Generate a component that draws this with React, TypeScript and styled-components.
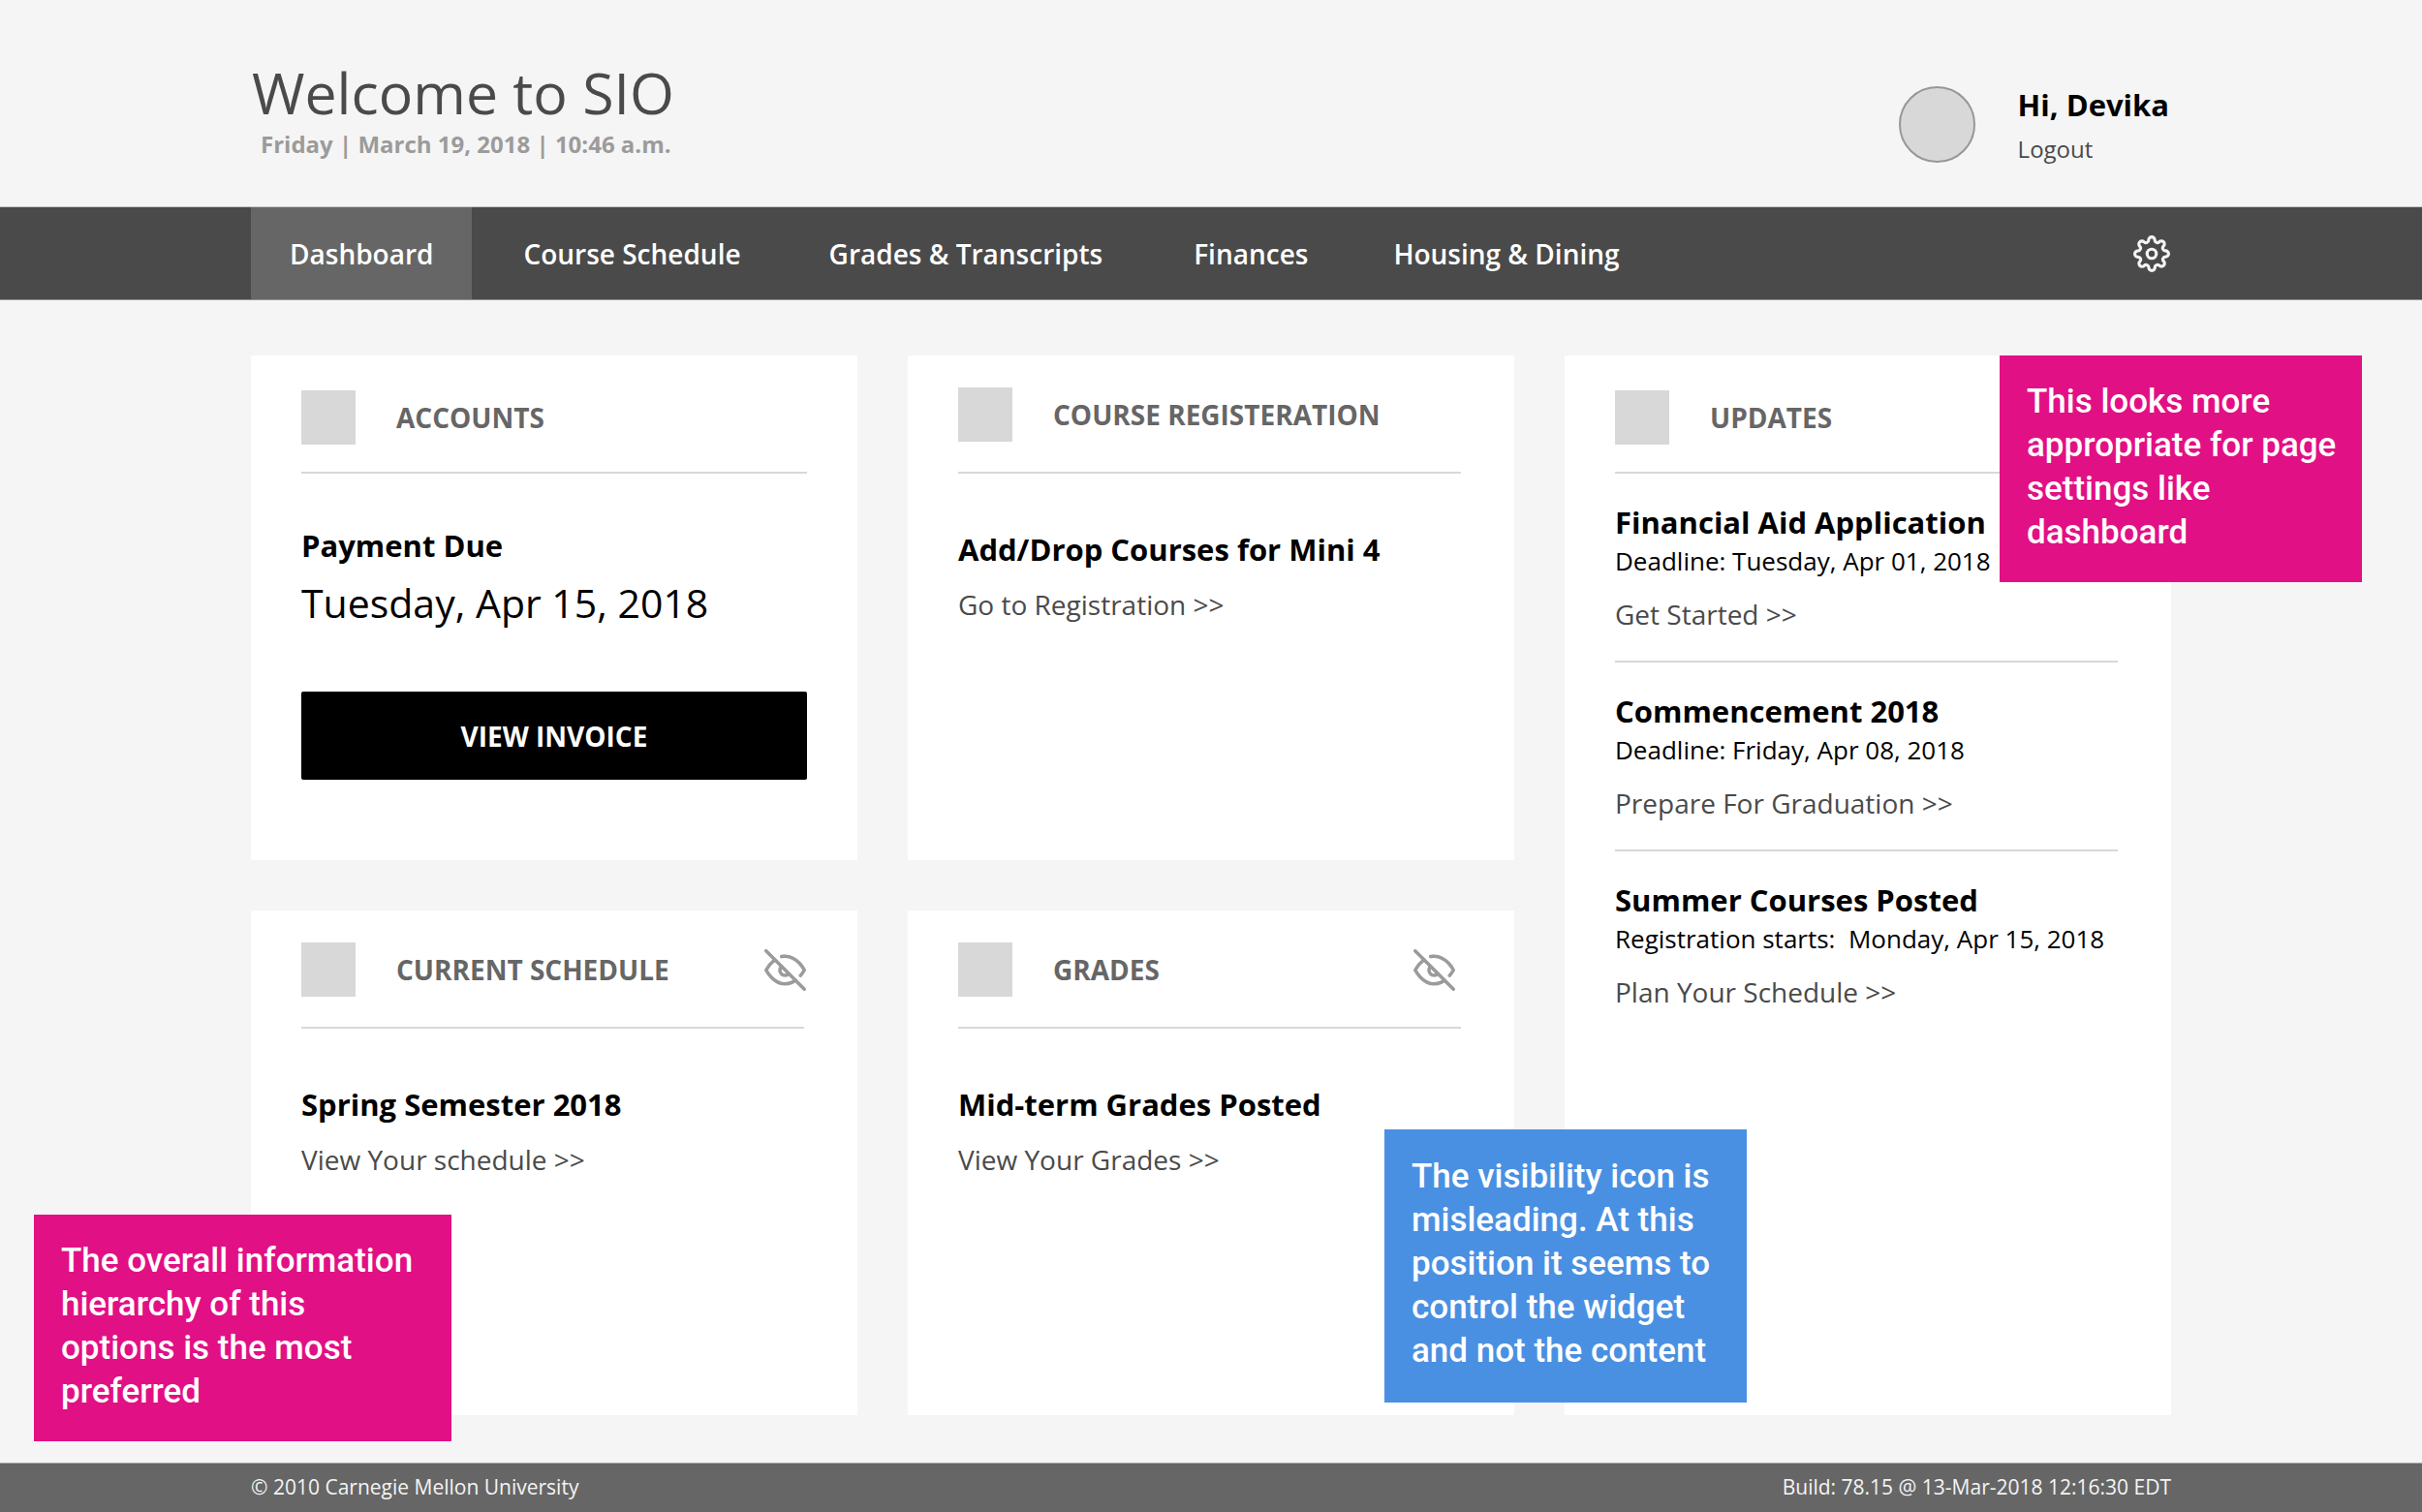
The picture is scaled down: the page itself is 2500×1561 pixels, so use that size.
import React from "react";
import styled, { createGlobalStyle } from "styled-components";
import { FiEyeOff, FiSettings } from "react-icons/fi";

const GlobalStyle = createGlobalStyle`
  *, *::before, *::after { box-sizing: border-box; }
  body {
    margin: 0;
    background: #f5f5f5;
    font-family: "Open Sans", "Noto Sans", sans-serif;
    color: #000;
  }
  h1, h2, h3, p { margin: 0; }
  a { text-decoration: none; }
  button { font-family: inherit; cursor: pointer; }
`;

const Page = styled.div`
  display: flex;
  flex-direction: column;
  min-height: 100vh;
  overflow-x: hidden;
`;

const Container = styled.div`
  width: calc(100% - 120px);
  max-width: 1982px;
  margin: 0 auto;
`;

const HeaderRow = styled(Container)`
  display: flex;
  justify-content: space-between;
  align-items: flex-start;
  height: 213px;
  padding-top: 55px;
`;

const Title = styled.h1`
  padding-left: 1px;
  font-size: 59px;
  line-height: 80px;
  font-weight: 400;
  color: #4a4a4a;
`;

const DateLine = styled.p`
  padding-left: 10px;
  font-size: 24px;
  line-height: 28px;
  font-weight: 700;
  color: #9b9b9b;
`;

const User = styled.div`
  display: flex;
  gap: 44px;
  padding: 34px 2px 0 0;
`;

const Avatar = styled.div`
  width: 79px;
  height: 79px;
  border: 2px solid #979797;
  border-radius: 50%;
  background: #d8d8d8;
`;

const UserText = styled.div`
  margin-top: -2px;
`;

const UserName = styled.p`
  font-size: 31px;
  line-height: 42px;
  font-weight: 700;
`;

const Logout = styled.a`
  display: block;
  font-size: 24px;
  line-height: 50px;
  color: #4a4a4a;
`;

const NavBar = styled.nav`
  background: #4a4a4a;
  border-top: 1px solid #c4c6c4;
  border-bottom: 1px solid #979797;
`;

const NavRow = styled(Container)`
  display: flex;
  align-items: stretch;
  height: 95px;
  padding-right: 1px;
`;

const NavLink = styled.a<{ $active?: boolean; $space?: number }>`
  display: flex;
  align-items: center;
  margin-left: ${(p) => p.$space ?? 0}px;
  padding: 0 ${(p) => (p.$active ? 40 : 0)}px;
  background: ${(p) => (p.$active ? "#666" : "transparent")};
  font-size: 28px;
  font-weight: 600;
  color: #fff;
  white-space: nowrap;
`;

const IconButton = styled.button<{ $color: string; $inset?: number }>`
  display: flex;
  align-items: center;
  margin-left: auto;
  margin-right: ${(p) => p.$inset ?? 0}px;
  padding: 0;
  border: 0;
  background: none;
  color: ${(p) => p.$color};
`;

const Main = styled.main`
  flex: 1;
  padding: 57px 0 48px;
`;

const Cards = styled(Container)`
  display: grid;
  grid-template-columns: repeat(3, 1fr);
  grid-auto-rows: minmax(521px, auto);
  gap: 52px;
`;

const Card = styled.section<{ $tall?: boolean; $wide?: boolean }>`
  position: relative;
  grid-row: ${(p) => (p.$tall ? "1 / span 2" : "auto")};
  grid-column: ${(p) => (p.$tall ? "3" : "auto")};
  padding: 0 ${(p) => (p.$wide ? 52 : 55)}px 52px 52px;
  background: #fff;
`;

const CardHead = styled.header<{ $low?: boolean }>`
  display: flex;
  align-items: center;
  gap: 42px;
  height: 122px;
  padding-top: ${(p) => (p.$low ? 8 : 2)}px;
  border-bottom: 2px solid #d8d8d8;
`;

const Swatch = styled.span`
  width: 56px;
  height: 56px;
  background: #d8d8d8;
`;

const CardTitle = styled.h2`
  font-size: 28px;
  line-height: 36px;
  font-weight: 700;
  color: #666;
`;

const Heading = styled.h3`
  font-size: 31px;
  line-height: 42px;
  font-weight: 700;
`;

const TextLink = styled.a`
  display: block;
  font-size: 28px;
  line-height: 36px;
  color: #4a4a4a;
`;

const Payment = styled.div`
  padding-top: 53px;
`;

const DueDate = styled.p`
  padding-top: 10px;
  font-size: 41px;
  line-height: 56px;
`;

const Invoice = styled.button`
  width: 100%;
  height: 91px;
  margin-top: 64px;
  border: 0;
  border-radius: 2px;
  background: #000;
  font-size: 28px;
  font-weight: 700;
  color: #fff;
`;

const Summary = styled.div`
  display: grid;
  gap: 18px;
  padding-top: 57px;
`;

const Update = styled.article`
  height: 195px;
  padding-top: 29px;
  border-bottom: 2px solid #d8d8d8;
  &:last-of-type { border-bottom: 0; }
`;

const UpdateDate = styled.p`
  padding-bottom: 18px;
  font-size: 26px;
  line-height: 38px;
  white-space: pre;
`;

const Note = styled.aside`
  position: absolute;
  z-index: 1;
  width: 374px;
  padding: 25px 24px 29px 28px;
  background: #e21085;
  font-family: Roboto, "Noto Sans", sans-serif;
  font-size: 35px;
  font-weight: 500;
  line-height: 45px;
  color: #fff;
`;

const SettingsNote = styled(Note)`
  top: 0;
  right: -197px;
`;

const HierarchyNote = styled(Note)`
  left: -224px;
  bottom: -27px;
  width: 431px;
  padding-right: 36px;
`;

const VisibilityNote = styled(Note)`
  right: -240px;
  bottom: 13px;
  padding: 26px 24px 31px 28px;
  background: #4a90e2;
`;

const Footer = styled.footer`
  background: #666;
  border-top: 1px solid #a8aaa8;
`;

const FooterRow = styled(Container)`
  display: flex;
  justify-content: space-between;
  font-size: 21px;
  line-height: 48px;
  padding-bottom: 2px;
  color: #f4f4f4;
`;

const tabs = [
  { label: "Course Schedule", space: 53 },
  { label: "Grades & Transcripts", space: 91 },
  { label: "Finances", space: 94 },
  { label: "Housing & Dining", space: 88 },
];

const updates = [
  { title: "Financial Aid Application", date: "Deadline: Tuesday, Apr 01, 2018", link: "Get Started >>" },
  { title: "Commencement 2018", date: "Deadline: Friday, Apr 08, 2018", link: "Prepare For Graduation >>" },
  { title: "Summer Courses Posted", date: "Registration starts:  Monday, Apr 15, 2018", link: "Plan Your Schedule >>" },
];

type HeadProps = { title: string; low?: boolean; hideable?: boolean; iconInset?: number };

function Head({ title, low, hideable, iconInset }: HeadProps) {
  return (
    <CardHead $low={low}>
      <Swatch />
      <CardTitle>{title}</CardTitle>
      {hideable && (
        <IconButton $color="#9b9b9b" $inset={iconInset} aria-label={`Hide ${title}`}>
          <FiEyeOff size={43} />
        </IconButton>
      )}
    </CardHead>
  );
}

export default function App() {
  return (
    <Page>
      <GlobalStyle />
      <header>
        <HeaderRow>
          <div>
            <Title>Welcome to SIO</Title>
            <DateLine>Friday | March 19, 2018 | 10:46 a.m.</DateLine>
          </div>
          <User>
            <Avatar />
            <UserText>
              <UserName>Hi, Devika</UserName>
              <Logout href="#logout">Logout</Logout>
            </UserText>
          </User>
        </HeaderRow>
        <NavBar>
          <NavRow>
            <NavLink href="#dashboard" $active>Dashboard</NavLink>
            {tabs.map((t) => (
              <NavLink key={t.label} href="#" $space={t.space}>{t.label}</NavLink>
            ))}
            <IconButton $color="#f4f4f4" aria-label="Settings">
              <FiSettings size={38} />
            </IconButton>
          </NavRow>
        </NavBar>
      </header>
      <Main>
        <Cards>
          <Card $wide>
            <Head title="ACCOUNTS" low />
            <Payment>
              <Heading>Payment Due</Heading>
              <DueDate>Tuesday, Apr 15, 2018</DueDate>
              <Invoice>VIEW INVOICE</Invoice>
            </Payment>
          </Card>
          <Card>
            <Head title="COURSE REGISTERATION" />
            <Summary>
              <Heading>Add/Drop Courses for Mini 4</Heading>
              <TextLink href="#registration">Go to Registration &gt;&gt;</TextLink>
            </Summary>
          </Card>
          <Card $tall>
            <Head title="UPDATES" low />
            {updates.map((u) => (
              <Update key={u.title}>
                <Heading>{u.title}</Heading>
                <UpdateDate>{u.date}</UpdateDate>
                <TextLink href="#">{u.link}</TextLink>
              </Update>
            ))}
            <SettingsNote>This looks more appropriate for page settings like dashboard</SettingsNote>
          </Card>
          <Card>
            <Head title="CURRENT SCHEDULE" hideable iconInset={-2} />
            <Summary>
              <Heading>Spring Semester 2018</Heading>
              <TextLink href="#schedule">View Your schedule &gt;&gt;</TextLink>
            </Summary>
            <HierarchyNote>The overall information hierarchy of this options is the most preferred</HierarchyNote>
          </Card>
          <Card>
            <Head title="GRADES" hideable iconInset={6} />
            <Summary>
              <Heading>Mid-term Grades Posted</Heading>
              <TextLink href="#grades">View Your Grades &gt;&gt;</TextLink>
            </Summary>
            <VisibilityNote>
              The visibility icon is misleading. At this position it seems to control the widget and not the content
            </VisibilityNote>
          </Card>
        </Cards>
      </Main>
      <Footer>
        <FooterRow>
          <span>© 2010 Carnegie Mellon University</span>
          <span>Build: 78.15 @ 13-Mar-2018 12:16:30 EDT</span>
        </FooterRow>
      </Footer>
    </Page>
  );
}
